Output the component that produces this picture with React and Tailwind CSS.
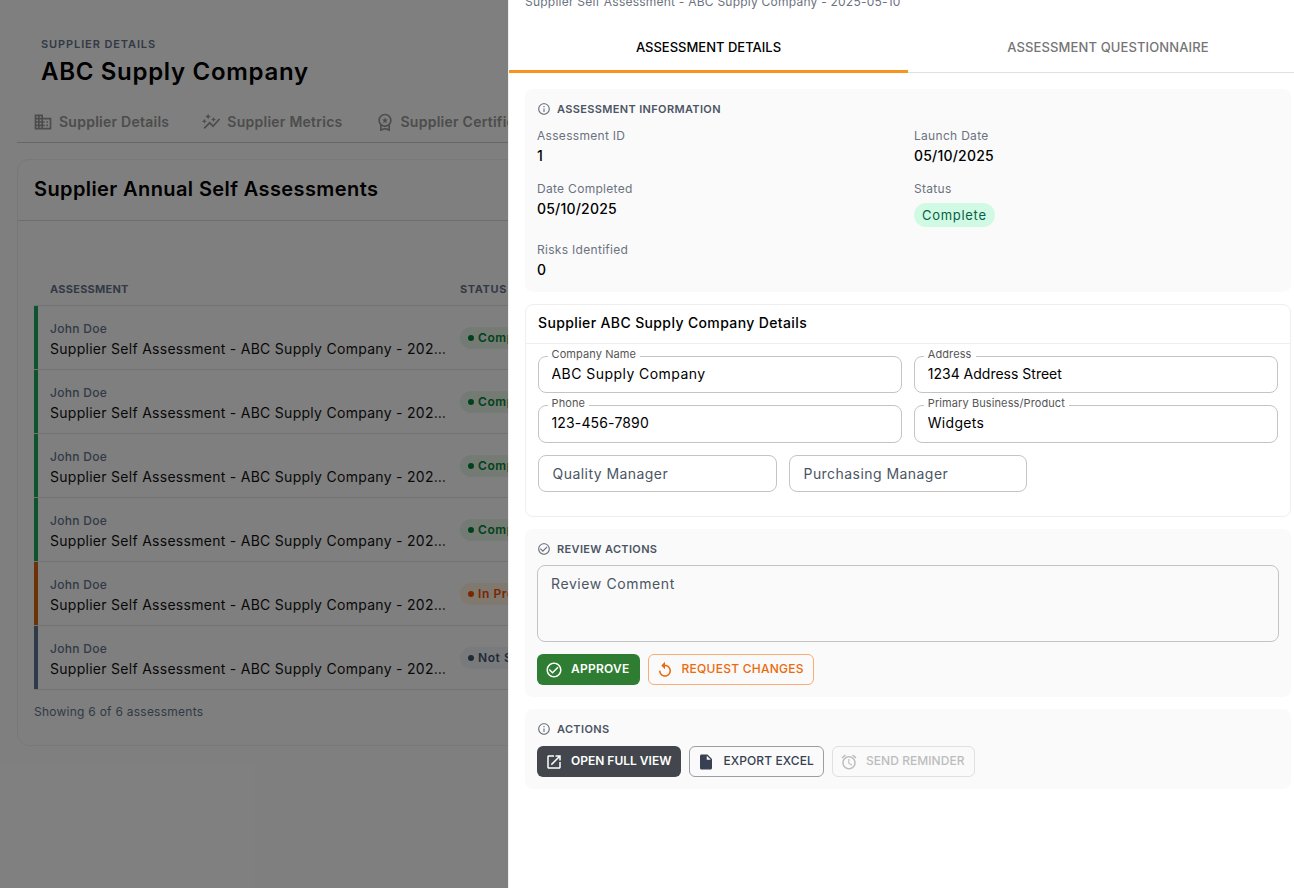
import React from 'react';

const Icon = ({ d, className }) => (
  <svg viewBox="0 0 24 24" fill="currentColor" className={className}>
    <path d={d} />
  </svg>
);

const icons = {
  business: 'M12 7V3H2v18h20V7zM6 19H4v-2h2zm0-4H4v-2h2zm0-4H4V9h2zm0-4H4V5h2zm4 12H8v-2h2zm0-4H8v-2h2zm0-4H8V9h2zm0-4H8V5h2zm10 12h-8v-2h2v-2h-2v-2h2v-2h-2V9h8zm-2-8h-2v2h2zm0 4h-2v2h2z',
  graph: 'M14.06 9.94 12 9l2.06-.94L15 6l.94 2.06L18 9l-2.06.94L15 12zM4 14l.94-2.06L7 11l-2.06-.94L4 8l-.94 2.06L1 11l2.06.94zm4.5-5 1.09-2.41L12 5.5 9.59 4.41 8.5 2 7.41 4.41 5 5.5l2.41 1.09zm-4 11.5 6-6.01 4 4L23 8.93l-1.41-1.41-7.09 7.97-4-4L3 19z',
  premium: 'M9.68 13.69 12 11.93l2.31 1.76-.88-2.85L15.75 9h-2.84L12 6.19 11.09 9H8.25l2.31 1.84zM20 10c0-4.42-3.58-8-8-8s-8 3.58-8 8c0 2.03.76 3.87 2 5.28V23l6-2 6 2v-7.72c1.24-1.41 2-3.25 2-5.28m-8-6c3.31 0 6 2.69 6 6s-2.69 6-6 6-6-2.69-6-6 2.69-6 6-6m0 15-4 1.02v-3.1c1.18.68 2.54 1.08 4 1.08s2.82-.4 4-1.08v3.1z',
  info: 'M11 7h2v2h-2zm0 4h2v6h-2zm1-9C6.48 2 2 6.48 2 12s4.48 10 10 10 10-4.48 10-10S17.52 2 12 2m0 18c-4.41 0-8-3.59-8-8s3.59-8 8-8 8 3.59 8 8-3.59 8-8 8',
  check: 'M16.59 7.58 10 14.17l-3.59-3.58L5 12l5 5 8-8zM12 2C6.48 2 2 6.48 2 12s4.48 10 10 10 10-4.48 10-10S17.52 2 12 2m0 18c-4.42 0-8-3.58-8-8s3.58-8 8-8 8 3.58 8 8-3.58 8-8 8',
  replay: 'M12 5V1L7 6l5 5V7c3.31 0 6 2.69 6 6s-2.69 6-6 6-6-2.69-6-6H4c0 4.42 3.58 8 8 8s8-3.58 8-8-3.58-8-8-8',
  open: 'M19 19H5V5h7V3H5c-1.11 0-2 .9-2 2v14c0 1.1.89 2 2 2h14c1.1 0 2-.9 2-2v-7h-2zM14 3v2h3.59l-9.83 9.83 1.41 1.41L19 6.41V10h2V3z',
  file: 'M6 2c-1.1 0-1.99.9-1.99 2L4 20c0 1.1.89 2 1.99 2H18c1.1 0 2-.9 2-2V8l-6-6zm7 7V3.5L18.5 9z',
  alarm: 'm22 5.72-4.6-3.86-1.29 1.53 4.6 3.86zM7.88 3.39 6.6 1.86 2 5.71l1.29 1.53zM12.5 8H11v6l4.75 2.85.75-1.23-4-2.37zM12 4c-4.97 0-9 4.03-9 9s4.03 9 9 9c4.97 0 9-4.03 9-9s-4.03-9-9-9m0 16c-3.87 0-7-3.13-7-7s3.13-7 7-7 7 3.13 7 7-3.13 7-7 7',
};

const rows = [
  { bar: 'bg-[#18a85a]', pill: 'bg-[#e8f5e9] text-green-700', dot: 'bg-green-700', status: 'Complete' },
  { bar: 'bg-[#18a85a]', pill: 'bg-[#e8f5e9] text-green-700', dot: 'bg-green-700', status: 'Complete' },
  { bar: 'bg-[#18a85a]', pill: 'bg-[#e8f5e9] text-green-700', dot: 'bg-green-700', status: 'Complete' },
  { bar: 'bg-[#18a85a]', pill: 'bg-[#e8f5e9] text-green-700', dot: 'bg-green-700', status: 'Complete' },
  { bar: 'bg-[#d9650a]', pill: 'bg-[#fff3e0] text-orange-600', dot: 'bg-orange-600', status: 'In Progress' },
  { bar: 'bg-[#5e7490]', pill: 'bg-slate-100 text-slate-600', dot: 'bg-slate-600', status: 'Not Started' },
];

const SupplierTab = ({ icon, label }) => (
  <div className="flex items-center gap-[6px] text-[#999] text-sm font-semibold tracking-[0.25px] shrink-0">
    <Icon d={icon} className="w-5 h-5" />
    <span>{label}</span>
  </div>
);

const SectionTitle = ({ icon, children }) => (
  <div className="flex items-center gap-[6px] h-4 text-[11px] font-semibold tracking-[0.35px] text-[#4b5563]">
    <Icon d={icon} className="w-[14px] h-[14px] text-[#6b7280]" />
    <span>{children}</span>
  </div>
);

const Info = ({ label, children }) => (
  <div>
    <div className="text-xs leading-4 tracking-[0.3px] text-[#6b7280]">{label}</div>
    {children}
  </div>
);

const Value = ({ children }) => (
  <div className="mt-[2px] text-sm leading-5 font-medium tracking-[0.2px] text-black">{children}</div>
);

const Field = ({ label, value, className = '', inputClass = '' }) => (
  <div className={`relative ${className}`}>
    <input
      readOnly
      value={value}
      className={`w-full h-full px-[13px] pb-[3px] rounded-lg border border-[#c4c4c4] bg-white text-sm text-black outline-none ${inputClass}`}
    />
    <span className="absolute left-[10px] top-[-9px] px-1 bg-white text-[11px] leading-[14px] tracking-[0.1px] text-[#555]">{label}</span>
  </div>
);

const EmptyField = ({ placeholder, className = '' }) => (
  <input
    readOnly
    placeholder={placeholder}
    className={`h-[37px] px-[14px] rounded-lg border border-[#c4c4c4] bg-white text-sm tracking-[0.45px] placeholder:text-[#4b5563] outline-none ${className}`}
  />
);

const ActionButton = ({ icon, className, children }) => (
  <button className={`flex items-center gap-2 h-[31px] rounded-md text-xs ${className}`}>
    <Icon d={icon} className="w-[18px] h-[18px]" />
    <span className="pb-[2px]">{children}</span>
  </button>
);

export default function App() {
  return (
    <div className="relative h-screen overflow-hidden bg-white font-['Inter','Liberation_Sans',sans-serif]">
      {/* page behind the drawer */}
      <div className="px-[17px] pt-[36px]">
        <div className="pl-6">
          <div className="text-[11px] leading-4 font-semibold tracking-[0.9px] text-[#64748b]">SUPPLIER DETAILS</div>
          <h1 className="mt-[4px] text-2xl leading-8 font-semibold tracking-[0.7px] text-black">ABC Supply Company</h1>
        </div>
        <div className="mt-[14px] h-[41px] pl-[16px] flex items-start pt-[10px] gap-[32px] border-b border-[#ccc]">
          <SupplierTab icon={icons.business} label="Supplier Details" />
          <SupplierTab icon={icons.graph} label="Supplier Metrics" />
          <SupplierTab icon={icons.premium} label="Supplier Certifications" />
        </div>
        <div className="mt-[16px] h-[587px] rounded-xl border border-[#f0f0f0]">
          <div className="h-[61px] px-4 pb-[3px] flex items-center border-b border-[#ddd]">
            <h2 className="text-xl font-semibold tracking-[0.4px] text-black">Supplier Annual Self Assessments</h2>
          </div>
          <div className="px-4">
            <div className="h-[85px] flex items-end pb-2 border-b border-[#e5e7eb] text-[11px] leading-4 font-bold tracking-[0.25px] text-[#64748b]">
              <div className="w-[426px] pl-4">ASSESSMENT</div>
              <div className="tracking-[0.6px]">STATUS</div>
            </div>
            {rows.map((row, i) => (
              <div key={i} className="flex h-16 border-b border-[#e5e7eb]">
                <div className={`w-1 shrink-0 ${row.bar}`} />
                <div className="w-[422px] pl-3 pr-[6px] pt-[14px]">
                  <div className="text-xs leading-[18px] font-medium tracking-[0.3px] text-[#64748b]">John Doe</div>
                  <div className="truncate text-sm leading-[21px] tracking-[0.28px] text-[#111]">Supplier Self Assessment - ABC Supply Company - 2025-05-10</div>
                </div>
                <div className="self-center">
                  <span className={`flex items-center gap-1 h-[22px] px-2 rounded-full text-xs font-semibold tracking-[0.6px] ${row.pill}`}>
                    <span className={`w-[6px] h-[6px] rounded-full ${row.dot}`} />
                    {row.status}
                  </span>
                </div>
              </div>
            ))}
            <div className="mt-[14px] text-xs leading-4 tracking-[0.25px] text-[#64748b]">Showing 6 of 6 assessments</div>
          </div>
        </div>
      </div>

      <div className="absolute inset-0 bg-black/50" />

      {/* drawer, scrolled a little so the subtitle is cut off */}
      <div className="absolute right-0 top-0 bottom-0 w-[786px] bg-white border-l border-[#eee] overflow-hidden">
        <div className="-mt-2 h-5 pl-4 text-xs leading-5 tracking-[0.23px] text-[#6b7280]">Supplier Self Assessment - ABC Supply Company - 2025-05-10</div>
        <div className="mt-[11px] h-[50px] flex border-b border-[#e0e0e0] text-[13px] font-medium">
          <div className="w-[399px] h-[50px] pt-[3px] flex items-center justify-center border-b-[3px] border-[#f7941d] text-black">ASSESSMENT DETAILS</div>
          <div className="flex-1 pl-[14px] flex items-center justify-center tracking-[0.12px] text-[#757575]">ASSESSMENT QUESTIONNAIRE</div>
        </div>

        <div className="pl-4 pr-[3px] pt-4 flex flex-col gap-3">
          <div className="p-3 rounded-lg bg-[#fafafa]">
            <SectionTitle icon={icons.info}>ASSESSMENT INFORMATION</SectionTitle>
            <div className="mt-[11px] grid grid-cols-2 gap-x-3 gap-y-[15px]">
              <Info label="Assessment ID"><Value>1</Value></Info>
              <Info label="Launch Date"><Value>05/10/2025</Value></Info>
              <Info label="Date Completed"><Value>05/10/2025</Value></Info>
              <Info label="Status">
                <span className="mt-[6px] pt-[1px] inline-flex items-center h-6 px-2 rounded-full bg-[#d1fae5] text-[13px] tracking-[0.7px] text-[#065f46]">Complete</span>
              </Info>
              <Info label="Risks Identified"><Value>0</Value></Info>
            </div>
          </div>

          <div className="h-[213px] rounded-lg border border-[#eee] bg-white">
            <div className="h-[39px] px-3 pb-[2px] flex items-center border-b border-[#eee] text-sm font-medium tracking-[0.37px] text-black">Supplier ABC Supply Company Details</div>
            <div className="pl-[11.5px] pr-3 pt-3 flex flex-col gap-3">
              <div className="grid grid-cols-2 gap-3">
                <Field label="Company Name" value="ABC Supply Company" className="h-[37px]" inputClass="tracking-[0.45px]" />
                <Field label="Address" value="1234 Address Street" className="h-[37px]" />
                <Field label="Phone" value="123-456-7890" className="h-[38px]" inputClass="tracking-[0.15px]" />
                <Field label="Primary Business/Product" value="Widgets" className="h-[38px]" inputClass="tracking-[0.3px]" />
              </div>
              <div className="flex gap-3">
                <EmptyField placeholder="Quality Manager" className="w-[239px]" />
                <EmptyField placeholder="Purchasing Manager" className="w-[238px]" />
              </div>
            </div>
          </div>

          <div className="p-3 rounded-lg bg-[#fafafa]">
            <SectionTitle icon={icons.check}>REVIEW ACTIONS</SectionTitle>
            <textarea
              readOnly
              placeholder="Review Comment"
              className="block mt-2 w-full h-[77px] px-[13px] py-2 rounded-lg border border-[#c4c4c4] bg-transparent text-sm leading-5 tracking-[0.6px] resize-none outline-none placeholder:text-[#4b5563]"
            />
            <div className="mt-3 flex gap-2">
              <ActionButton icon={icons.check} className="pl-2 pr-[10px] bg-[#2e7d32] font-semibold tracking-[0.25px] text-white">APPROVE</ActionButton>
              <ActionButton icon={icons.replay} className="pl-[7px] pr-[9px] border border-[#f7ab75] font-medium tracking-[0.25px] text-[#ea6a0c]">REQUEST CHANGES</ActionButton>
            </div>
          </div>

          <div className="p-3 rounded-lg bg-[#fafafa]">
            <SectionTitle icon={icons.info}>ACTIONS</SectionTitle>
            <div className="mt-[9px] flex gap-2">
              <ActionButton icon={icons.open} className="pl-2 pr-[10px] bg-[#43474d] font-semibold text-white">OPEN FULL VIEW</ActionButton>
              <ActionButton icon={icons.file} className="pl-[7px] pr-[9px] border border-[#9a9da1] font-medium tracking-[0.1px] text-[#374151]">EXPORT EXCEL</ActionButton>
              <ActionButton icon={icons.alarm} className="pl-[7px] pr-[9px] border border-[#e0e0e0] font-medium tracking-[0.05px] text-[#bdbdbd]">SEND REMINDER</ActionButton>
            </div>
          </div>
        </div>
      </div>
    </div>
  );
}
